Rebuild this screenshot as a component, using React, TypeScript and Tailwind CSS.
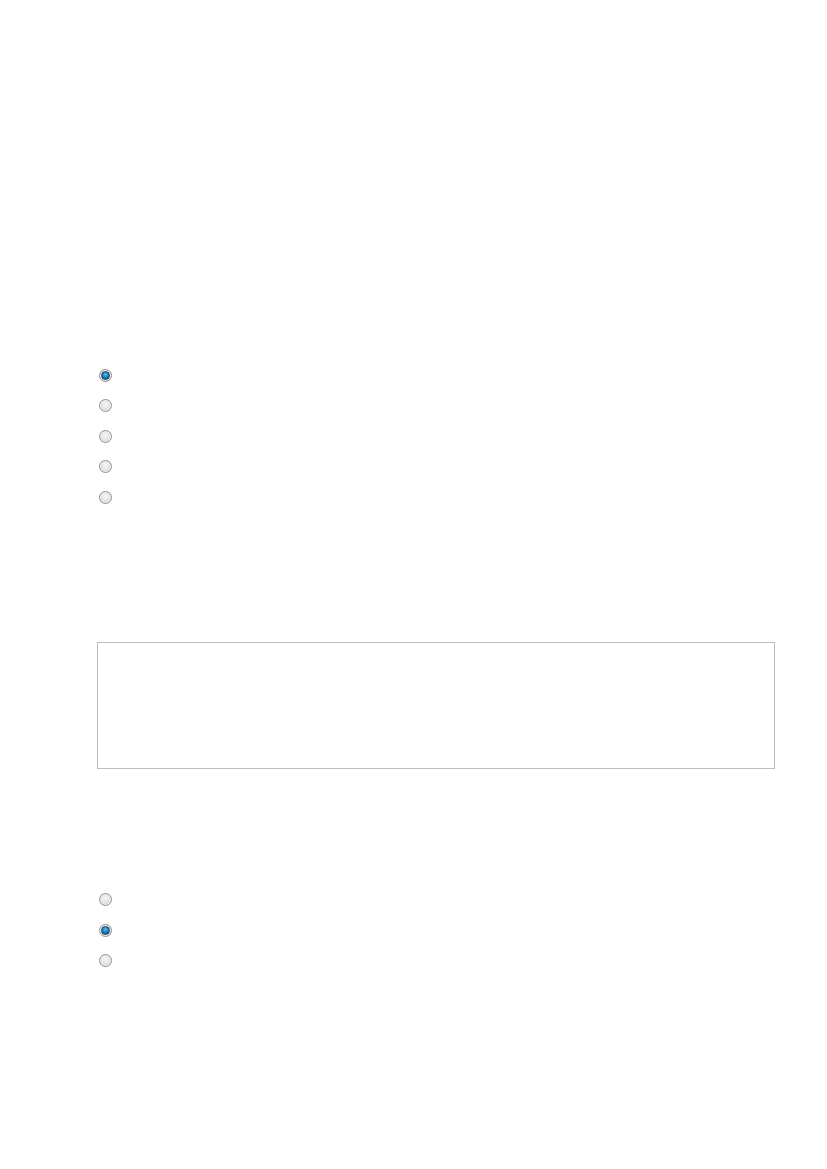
import React from "react";

interface RadioProps {
  readonly checked?: boolean;
}

// Old-style glossy radio: grey ring, pale face, blue bead when selected
const Radio = ({ checked = false }: RadioProps) => (
  <span className="w-[13px] h-[13px] rounded-full border border-[#8f8f8f] bg-[radial-gradient(circle_at_50%_40%,#f6f6f6_0%,#e2e2e2_55%,#c8c8c8_100%)] flex items-center justify-center shadow-[inset_0_0_0_1px_#efefef]">
    {checked && (
      <span className="w-[9px] h-[9px] rounded-full border border-[#173f63] bg-[radial-gradient(circle_at_50%_35%,#5fbcec_0%,#1680bd_50%,#0b5585_100%)]" />
    )}
  </span>
);

const RadioGroup = ({ count, selected }: { count: number; selected: number }) => (
  <div className="flex flex-col" role="radiogroup">
    {Array.from({ length: count }).map((_, i) => (
      <label key={i} className="h-[30.5px] flex items-center pl-[99px]">
        <Radio checked={i === selected} />
      </label>
    ))}
  </div>
);

export default function App() {
  return (
    <div className="w-[827px] min-h-[1169px] bg-white font-['Liberation_Sans',Arial,sans-serif]">
      <div className="pt-[360px]">
        <RadioGroup count={5} selected={0} />
      </div>
      <div className="mt-[129px] pl-[97px]">
        <textarea
          className="block w-[678px] h-[127px] border border-[#bdbdbd] resize-none outline-none bg-white"
          aria-label="comments"
        />
      </div>
      <div className="mt-[116px]">
        <RadioGroup count={3} selected={1} />
      </div>
    </div>
  );
}
